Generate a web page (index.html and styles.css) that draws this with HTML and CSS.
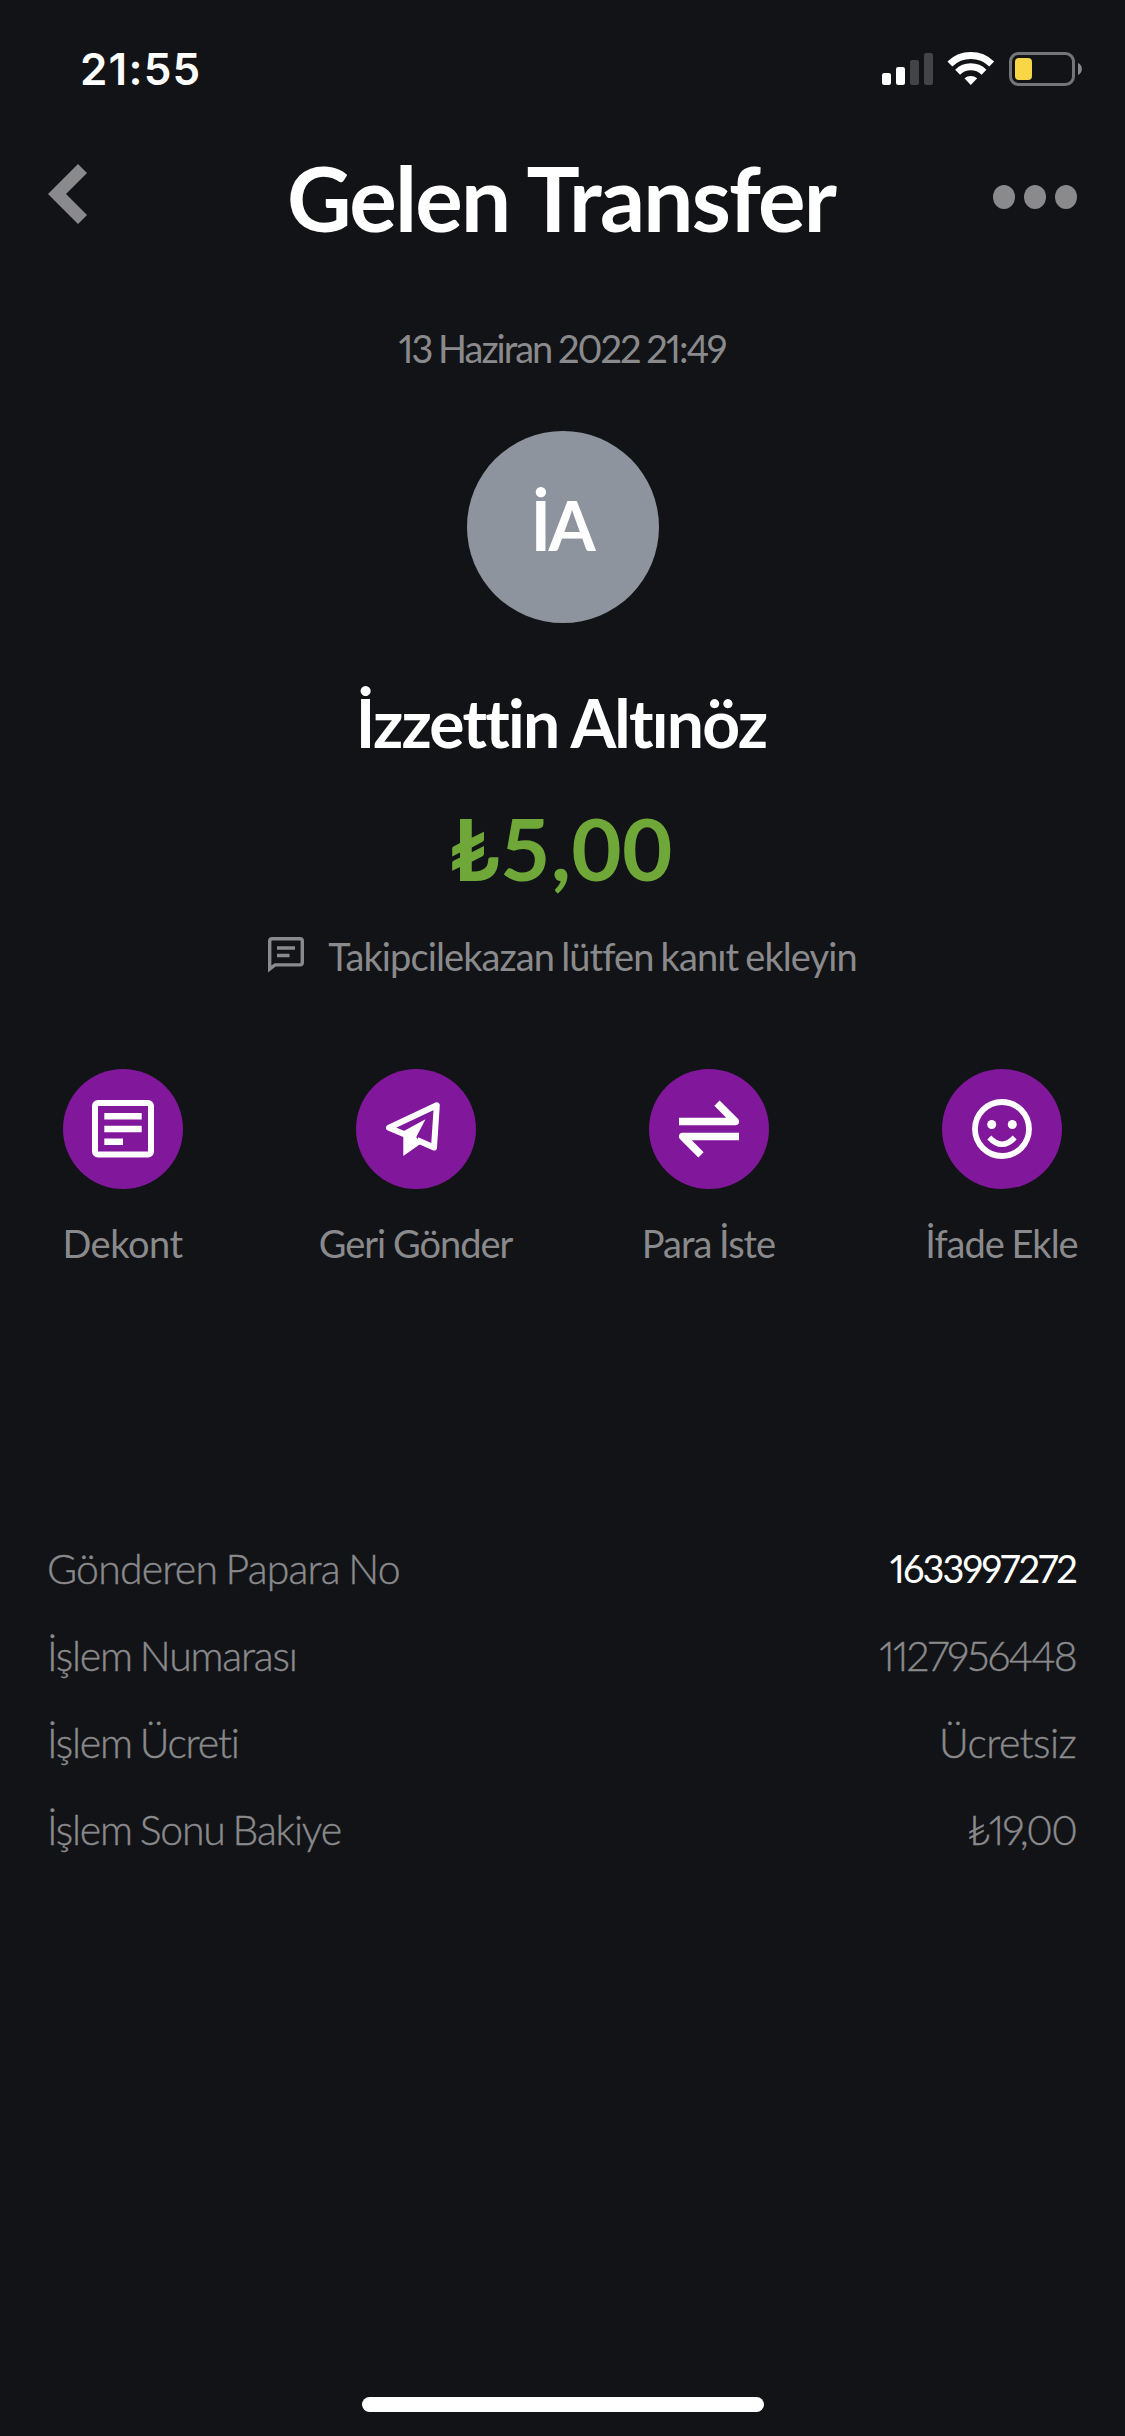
FILE: index.html
```html
<!DOCTYPE html>
<html lang="tr">
<head>
<meta charset="utf-8">
<title>Gelen Transfer</title>
<link rel="stylesheet" href="styles.css">
</head>
<body>
<div class="screen">
  <div class="status-bar">
    <span class="time">21:55</span>
    <svg class="status-icons" viewBox="882 52 200 34">
      <g fill="#fff"><rect x="882" y="73" width="9" height="12" rx="2.2"/><rect x="896" y="67" width="9" height="18" rx="2.2"/></g>
      <g fill="#434448"><rect x="910" y="60" width="9" height="25" rx="2.2"/><rect x="924" y="53" width="9" height="32" rx="2.2"/></g>
      <g fill="none" stroke="#fff" stroke-width="7"><path d="M949.9 64.1A30 30 0 0 1 991.7 64.1"/><path d="M957.6 72.2A19 19 0 0 1 984 72.2"/></g>
      <path fill="#fff" d="M964.4 78.2a10 10 0 0 1 12.8 0l-6.4 6.9z"/>
      <rect x="1010.5" y="53.5" width="63" height="31" rx="8" fill="none" stroke="#747578" stroke-width="3"/>
      <rect x="1015" y="58" width="17" height="22" rx="4" fill="#f8d648"/>
      <path fill="#88898b" d="M1078 63a6.6 6.6 0 0 1 0 12z"/>
    </svg>
  </div>

  <header class="header">
    <svg class="back" viewBox="0 0 39 60"><path fill="#8a8a8c" d="M0 30 30 0l9 9-21 21 21 21-9 9z"/></svg>
    <h1 class="title">Gelen Transfer</h1>
    <svg class="more" viewBox="0 0 84 24"><g fill="#8a8a8c"><ellipse cx="11" cy="12" rx="11" ry="12"/><ellipse cx="42" cy="12" rx="11" ry="12"/><ellipse cx="73" cy="12" rx="11" ry="12"/></g></svg>
  </header>

  <main class="summary">
    <time class="date">13 Haziran 2022 21:49</time>
    <div class="avatar"><span class="initials">İA</span></div>
    <h2 class="name">İzzettin Altınöz</h2>
    <div class="amount">₺5,00</div>
    <div class="note">
      <svg class="note-icon" viewBox="0 0 36 36"><path fill="none" stroke="#8a8a8c" stroke-width="3.4" d="M1.7 32V4q0-2.300 2.300-2.300H32q2.300 0 2.300 2.300V25.600q0 2.300-2.300 2.300H7z"/><path stroke="#8a8a8c" stroke-width="3.400" d="M9 11H27M9 18.500H21.500"/></svg>
      <span class="note-text">Takipcilekazan lütfen kanıt ekleyin</span>
    </div>
  </main>

  <nav class="actions">
    <div class="action">
      <svg class="action-icon" viewBox="0 0 120 120"><rect x="32" y="34" width="56" height="51.500" rx="3" fill="none" stroke="#fff" stroke-width="6"/><path stroke="#fff" stroke-width="6.500" d="M41.300 47.300H78.700M41.300 60H78.700M41.300 72.700H60"/></svg>
      <span class="action-label single">Dekont</span>
    </div>
    <div class="action">
      <svg class="action-icon" viewBox="0 0 120 120"><path fill="none" stroke="#fff" stroke-width="6" stroke-linejoin="round" d="M49 65.500 33 58.700 80.800 36.300 78 78.500 61 71"/><path fill="#fff" d="M69.500 50.300 46 63l1.300 2V87l17-12-4-7z"/></svg>
      <span class="action-label">Geri Gönder</span>
    </div>
    <div class="action">
      <svg class="action-icon" viewBox="0 0 120 120"><path fill="none" stroke="#fff" stroke-width="7.500" stroke-linejoin="round" d="M30 52.500H86.300L68 34.200M90 67.500H33.700L52 85.800"/></svg>
      <span class="action-label">Para İste</span>
    </div>
    <div class="action">
      <svg class="action-icon" viewBox="0 0 120 120"><circle cx="60" cy="60" r="27" fill="none" stroke="#fff" stroke-width="5.800"/><circle cx="49.700" cy="55.500" r="4.500" fill="#fff"/><circle cx="70.300" cy="55.500" r="4.500" fill="#fff"/><path fill="none" stroke="#fff" stroke-width="5.500" d="M47.300 68.500Q60 82 72.700 68.500"/></svg>
      <span class="action-label">İfade Ekle</span>
    </div>
  </nav>

  <dl class="details">
    <div class="row"><dt class="sender">Gönderen Papara No</dt><dd class="strong">1633997272</dd></div>
    <div class="row"><dt>İşlem Numarası</dt><dd class="digits">1127956448</dd></div>
    <div class="row"><dt>İşlem Ücreti</dt><dd class="fee">Ücretsiz</dd></div>
    <div class="row"><dt>İşlem Sonu Bakiye</dt><dd class="digits">₺19,00</dd></div>
  </dl>

  <div class="home-indicator"></div>
</div>
</body>
</html>
```
FILE: styles.css
```css
* { box-sizing: border-box; margin: 0; padding: 0; }
body { background: #111317; color: #8a8a8c; font-family: Lato, sans-serif; }
svg { display: block; flex: none; }
.screen { width: 1125px; height: 2436px; display: flex; flex-direction: column; align-items: stretch; overflow: hidden; white-space: nowrap; }

.status-bar { height: 147px; padding: 42px 43px 0 80px; display: flex; justify-content: space-between; align-items: flex-start; }
.time { font: 600 44px/54px Inter, sans-serif; color: #fff; letter-spacing: 1.2px; }
.status-icons { width: 200px; height: 34px; margin-top: 10px; }

.header { height: 100px; padding: 0 48px; display: grid; grid-template-columns: 84px 1fr 84px; align-items: center; }
.back { width: 39px; height: 60px; margin-top: -7px; }
.title { margin-right: 3px; font-size: 89px; font-weight: 700; line-height: 101px; letter-spacing: -1.8px; color: #fff; text-align: center; }
.more { width: 84px; height: 24px; margin-top: -1px; }

.summary { display: flex; flex-direction: column; align-items: center; }
.date { margin: 78px 1px 0 0; font-size: 38px; line-height: 46px; letter-spacing: -2px; word-spacing: -1px; font-variant-numeric: proportional-nums; }
.avatar { width: 192px; height: 192px; margin-top: 60px; border-radius: 50%; background: #8d949e; display: flex; justify-content: center; }
.initials { margin: 53px 1px 0 0; font-size: 68px; line-height: 82px; font-weight: 700; letter-spacing: -2.5px; color: #fff; }
.name { margin: 60px 3px 0 0; font-size: 66px; font-weight: 700; line-height: 80px; letter-spacing: -1.8px; color: #fff; }
.amount { margin: 34px 3px 0 0; font-size: 87px; font-weight: 700; line-height: 101px; letter-spacing: .3px; color: #6fa839; }
.note { margin-top: 34px; display: flex; gap: 24px; }
.note-icon { width: 36px; height: 36px; margin-top: 5px; }
.note-text { font-size: 38px; line-height: 48px; letter-spacing: -.9px; word-spacing: -1.8px; }

.actions { margin-top: 89px; padding: 0 63px; display: flex; justify-content: space-between; }
.action { width: 120px; display: flex; flex-direction: column; align-items: center; gap: 31px; }
.action-icon { width: 120px; height: 120px; border-radius: 50%; background: #81179a; }
.action-label { margin-right: 1px; font-size: 38px; line-height: 47px; letter-spacing: -1px; word-spacing: -1px; }
.single { letter-spacing: -.5px; }

.details { margin-top: 258px; padding: 0 49px 0 47px; }
.row { display: flex; justify-content: space-between; font-size: 41px; line-height: 87px; font-weight: 300; letter-spacing: -1.2px; word-spacing: -2px; -webkit-text-stroke: .4px; }
.sender { letter-spacing: -.8px; }
.fee { letter-spacing: -.6px; }
.digits { letter-spacing: -1.8px; font-variant-numeric: proportional-nums; }
.strong { font-size: 38px; font-weight: 400; letter-spacing: -1.9px; color: #fff; font-variant-numeric: proportional-nums; -webkit-text-stroke: 0; }

.home-indicator { width: 402px; height: 15px; margin: auto auto 24px; border-radius: 8px; background: #fff; }
```
